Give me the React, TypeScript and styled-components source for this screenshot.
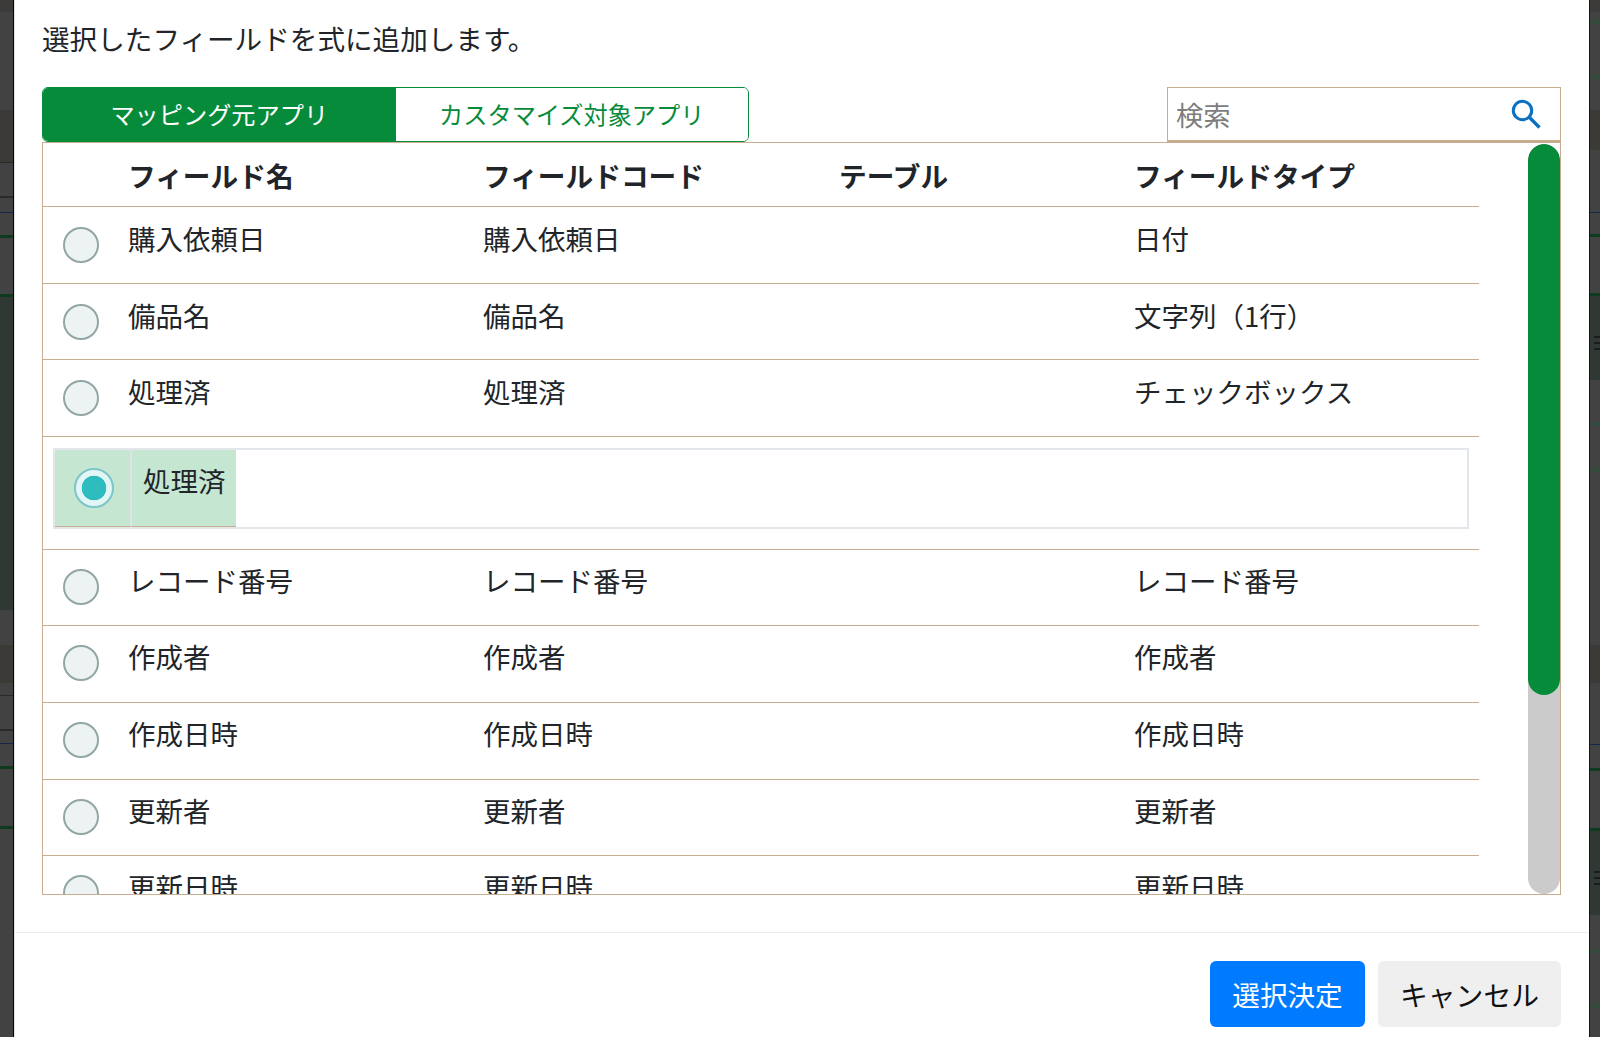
import React from 'react';
import styled, { createGlobalStyle } from 'styled-components';

type Band = [number, string];

const base = '#424242';
const dark = '#2f3833';
const brown = '#3c3a37';
const line = '#2c2a28';
const blue = '#16284a';
const green = '#0e3a1e';
const moss = '#344a3c';
const tan = '#c9ad90';

const leftBands: Band[] = [
  [12, '#3d3b39'], [98, base], [52, brown], [1, line], [33, base], [2, line], [14, base], [1, blue],
  [22, base], [3, green], [56, base], [3, green], [313, dark], [35, base], [38, brown], [12, base],
  [1, line], [33, base], [2, line], [12, base], [1, blue], [22, base], [3, green], [57, base], [3, green],
  [220, base],
];

const rightTop: Band[] = [
  [12, '#3d3b39'], [8, base], [4, moss], [51, base], [4, moss], [31, base], [40, brown], [62, base], [1, blue],
  [21, base], [3, green], [56, base], [3, green],
];
const rightMid: Band[] = [
  [42, base], [4, moss], [42, base], [4, moss], [173, base], [38, brown], [61, base], [1, blue], [23, base], [3, green], [57, base], [3, green],
];
const rightEnd: Band[] = [
  [34, base], [4, moss], [51, base], [4, moss], [40, base],
];

const upperFields = [
  { name: '購入依頼日', code: '購入依頼日', type: '日付' },
  { name: '備品名', code: '備品名', type: '文字列（1行）' },
  { name: '処理済', code: '処理済', type: 'チェックボックス' },
];

const lowerFields = [
  { name: 'レコード番号', code: 'レコード番号', type: 'レコード番号' },
  { name: '作成者', code: '作成者', type: '作成者' },
  { name: '作成日時', code: '作成日時', type: '作成日時' },
  { name: '更新者', code: '更新者', type: '更新者' },
  { name: '更新日時', code: '更新日時', type: '更新日時' },
];

const SearchIcon = () => (
  <svg width="32" height="32" viewBox="0 0 32 32" fill="none" stroke="#0a70c2" strokeWidth="3">
    <circle cx="12.5" cy="12.5" r="9.2" />
    <path d="M19.5 19.5 L29.5 29.5" strokeWidth="3.4" />
  </svg>
);

const FieldRow: React.FC<{ name: string; code: string; type: string; lower?: boolean }> = ({
  name,
  code,
  type,
  lower,
}) => (
  <Row>
    <RadioCell $lower={lower}>
      <Radio />
    </RadioCell>
    <Cell $lower={lower}>{name}</Cell>
    <Cell $lower={lower}>{code}</Cell>
    <Cell $lower={lower} />
    <Cell $lower={lower}>{type}</Cell>
  </Row>
);

const App: React.FC = () => {
  return (
    <Page>
      <GlobalStyle />
      <LeftStrip>
        {leftBands.map(([h, c], i) => (
          <StripBand key={i} $h={h} $c={c} />
        ))}
      </LeftStrip>
      <Modal>
        <Body>
          <Lead>選択したフィールドを式に追加します。</Lead>
          <Toolbar>
            <Tabs>
              <Tab $active>マッピング元アプリ</Tab>
              <Tab>カスタマイズ対象アプリ</Tab>
            </Tabs>
            <SearchBox>
              <SearchInput placeholder="検索" />
              <SearchIcon />
            </SearchBox>
          </Toolbar>
          <TableBox>
            <Rows>
              <HeaderRow>
                <span />
                <HeaderCell>フィールド名</HeaderCell>
                <HeaderCell>フィールドコード</HeaderCell>
                <HeaderCell>テーブル</HeaderCell>
                <HeaderCell>フィールドタイプ</HeaderCell>
              </HeaderRow>
              {upperFields.map((f) => (
                <FieldRow key={f.name} {...f} />
              ))}
              <SelectedRow>
                <SelectedFrame>
                  <SelectedRadioCell>
                    <RadioOn />
                  </SelectedRadioCell>
                  <SelectedName>処理済</SelectedName>
                </SelectedFrame>
              </SelectedRow>
              {lowerFields.map((f) => (
                <FieldRow key={f.name} {...f} lower />
              ))}
            </Rows>
            <Track>
              <Thumb />
            </Track>
          </TableBox>
        </Body>
        <Footer>
          <PrimaryButton>選択決定</PrimaryButton>
          <CancelButton>キャンセル</CancelButton>
        </Footer>
      </Modal>
      <RightStrip>
        {rightTop.map(([h, c], i) => (
          <StripBand key={i} $h={h} $c={c} />
        ))}
        <DarkBand>
          <Ticks />
        </DarkBand>
        {rightMid.map(([h, c], i) => (
          <StripBand key={i} $h={h} $c={c} />
        ))}
        <DarkBand>
          <Ticks />
        </DarkBand>
        {rightEnd.map(([h, c], i) => (
          <StripBand key={i} $h={h} $c={c} />
        ))}
      </RightStrip>
    </Page>
  );
};

export default App;

const GlobalStyle = createGlobalStyle`
  html, body {
    margin: 0;
    padding: 0;
    background: #424242;
  }
  * {
    box-sizing: border-box;
  }
`;

const Page = styled.div`
  display: flex;
  width: 1600px;
  height: 1037px;
  overflow: hidden;
  font-family: 'Noto Sans CJK JP', 'Noto Sans', sans-serif;
  color: #212529;
`;

const LeftStrip = styled.div`
  width: 14px;
  flex: none;
  border-right: 1.5px solid #050505;
  filter: blur(0.4px);
`;

const RightStrip = styled.div`
  width: 11px;
  flex: none;
  border-left: 1.5px solid #151515;
  filter: blur(0.4px);
`;

const StripBand = styled.div<{ $h: number; $c: string }>`
  height: ${(p) => p.$h}px;
  background: ${(p) => p.$c};
`;

const DarkBand = styled.div`
  height: 84px;
  padding: 40px 0 0 4px;
  background: ${dark};
`;

const Ticks = styled.div`
  height: 14px;
  background: repeating-linear-gradient(#1c1c1c 0 2px, transparent 2px 6px);
`;

const Modal = styled.div`
  flex: 1;
  display: flex;
  flex-direction: column;
  background: #fff;
  border-left: 1px solid #e4e4e4;
`;

const Body = styled.div`
  padding: 18px 28px 0 27px;
  height: 933px;
  border-bottom: 1.5px solid #e9ecef;
`;

const Lead = styled.div`
  font-size: 27.6px;
  line-height: 40px;
  height: 69px;
`;

const Toolbar = styled.div`
  display: flex;
  justify-content: space-between;
  height: 55px;
`;

const Tabs = styled.div`
  display: flex;
  width: 707px;
  border: 1px solid #068b3b;
  border-radius: 6px;
  overflow: hidden;
`;

const Tab = styled.div<{ $active?: boolean }>`
  flex: 1;
  display: flex;
  align-items: center;
  justify-content: center;
  font-size: 24.2px;
  padding-bottom: 3px;
  color: ${(p) => (p.$active ? '#fff' : '#068b3b')};
  background: ${(p) => (p.$active ? '#068b3b' : '#fff')};
`;

const SearchBox = styled.div`
  width: 394px;
  display: flex;
  align-items: center;
  padding-right: 18px;
  border: 1.5px solid ${tan};
  border-bottom-width: 2px;
`;

const SearchInput = styled.input`
  flex: 1;
  min-width: 0;
  border: 0;
  outline: 0;
  background: transparent;
  padding: 0 0 0 8px;
  font: 27.3px 'Noto Sans CJK JP', sans-serif;
  &::placeholder {
    color: #7d7d7d;
    opacity: 1;
  }
`;

const TableBox = styled.div`
  display: flex;
  justify-content: space-between;
  height: 753px;
  border: 1.5px solid ${tan};
  overflow: hidden;
`;

const Rows = styled.div`
  width: 1436px;
  flex: none;
`;

const HeaderRow = styled.div`
  display: grid;
  grid-template-columns: 85px 355px 356px 295px 1fr;
  height: 64px;
  padding-top: 12px;
  border-bottom: 1.5px solid ${tan};
`;

const HeaderCell = styled.div`
  font-size: 27.7px;
  line-height: 40px;
  font-weight: 700;
`;

const Row = styled.div`
  display: grid;
  grid-template-columns: 85px 355px 356px 295px 1fr;
  height: 76.6px;
  border-bottom: 1.5px solid ${tan};
`;

const RadioCell = styled.div<{ $lower?: boolean }>`
  padding: ${(p) => (p.$lower ? 19 : 20)}px 0 0 19.5px;
`;

const Radio = styled.span`
  display: block;
  width: 36px;
  height: 36px;
  border-radius: 50%;
  background: #edf3f3;
  border: 2.5px solid #92a6a6;
`;

const Cell = styled.div<{ $lower?: boolean }>`
  font-size: 27.5px;
  line-height: 40px;
  padding-top: ${(p) => (p.$lower ? 10 : 11)}px;
`;

const SelectedRow = styled.div`
  height: 113px;
  padding: 11px 10px 0;
  border-bottom: 1.5px solid ${tan};
`;

const SelectedFrame = styled.div`
  display: flex;
  height: 81px;
  border: 2px solid #e3e6ea;
`;

const SelectedRadioCell = styled.div`
  width: 77px;
  height: 77px;
  padding: 18px 0 0 19px;
  background: #c5e6d0;
  border-right: 2px solid #dfe3e6;
  border-bottom: 1.5px solid ${tan};
`;

const RadioOn = styled.span`
  display: block;
  width: 40px;
  height: 40px;
  border-radius: 50%;
  background: radial-gradient(circle, #2fbcbf 0 12px, #e2f6f6 12.6px);
  border: 2.5px solid #7fc4c9;
`;

const SelectedName = styled.div`
  width: 104px;
  height: 77px;
  padding: 10px 0 0 11px;
  font-size: 27.5px;
  line-height: 40px;
  background: #c5e6d0;
  border-bottom: 1.5px solid ${tan};
`;

const Track = styled.div`
  width: 32px;
  flex: none;
  margin-top: 1px;
  border-radius: 16px;
  background: #cbcbcb;
  overflow: hidden;
`;

const Thumb = styled.div`
  height: 551px;
  border-radius: 16px;
  background: #068b3b;
`;

const Footer = styled.div`
  display: flex;
  justify-content: flex-end;
  gap: 13px;
  padding: 28px 28px 0 0;
`;

const PrimaryButton = styled.button`
  width: 155px;
  height: 66px;
  border: 0;
  border-radius: 6px;
  background: #007bff;
  color: #fff;
  font: 27.6px 'Noto Sans CJK JP', sans-serif;
  padding: 0;
`;

const CancelButton = styled.button`
  width: 183px;
  height: 66px;
  border: 0;
  border-radius: 6px;
  background: #efefef;
  color: #111;
  font: 27.8px 'Noto Sans CJK JP', sans-serif;
  padding: 0;
`;
